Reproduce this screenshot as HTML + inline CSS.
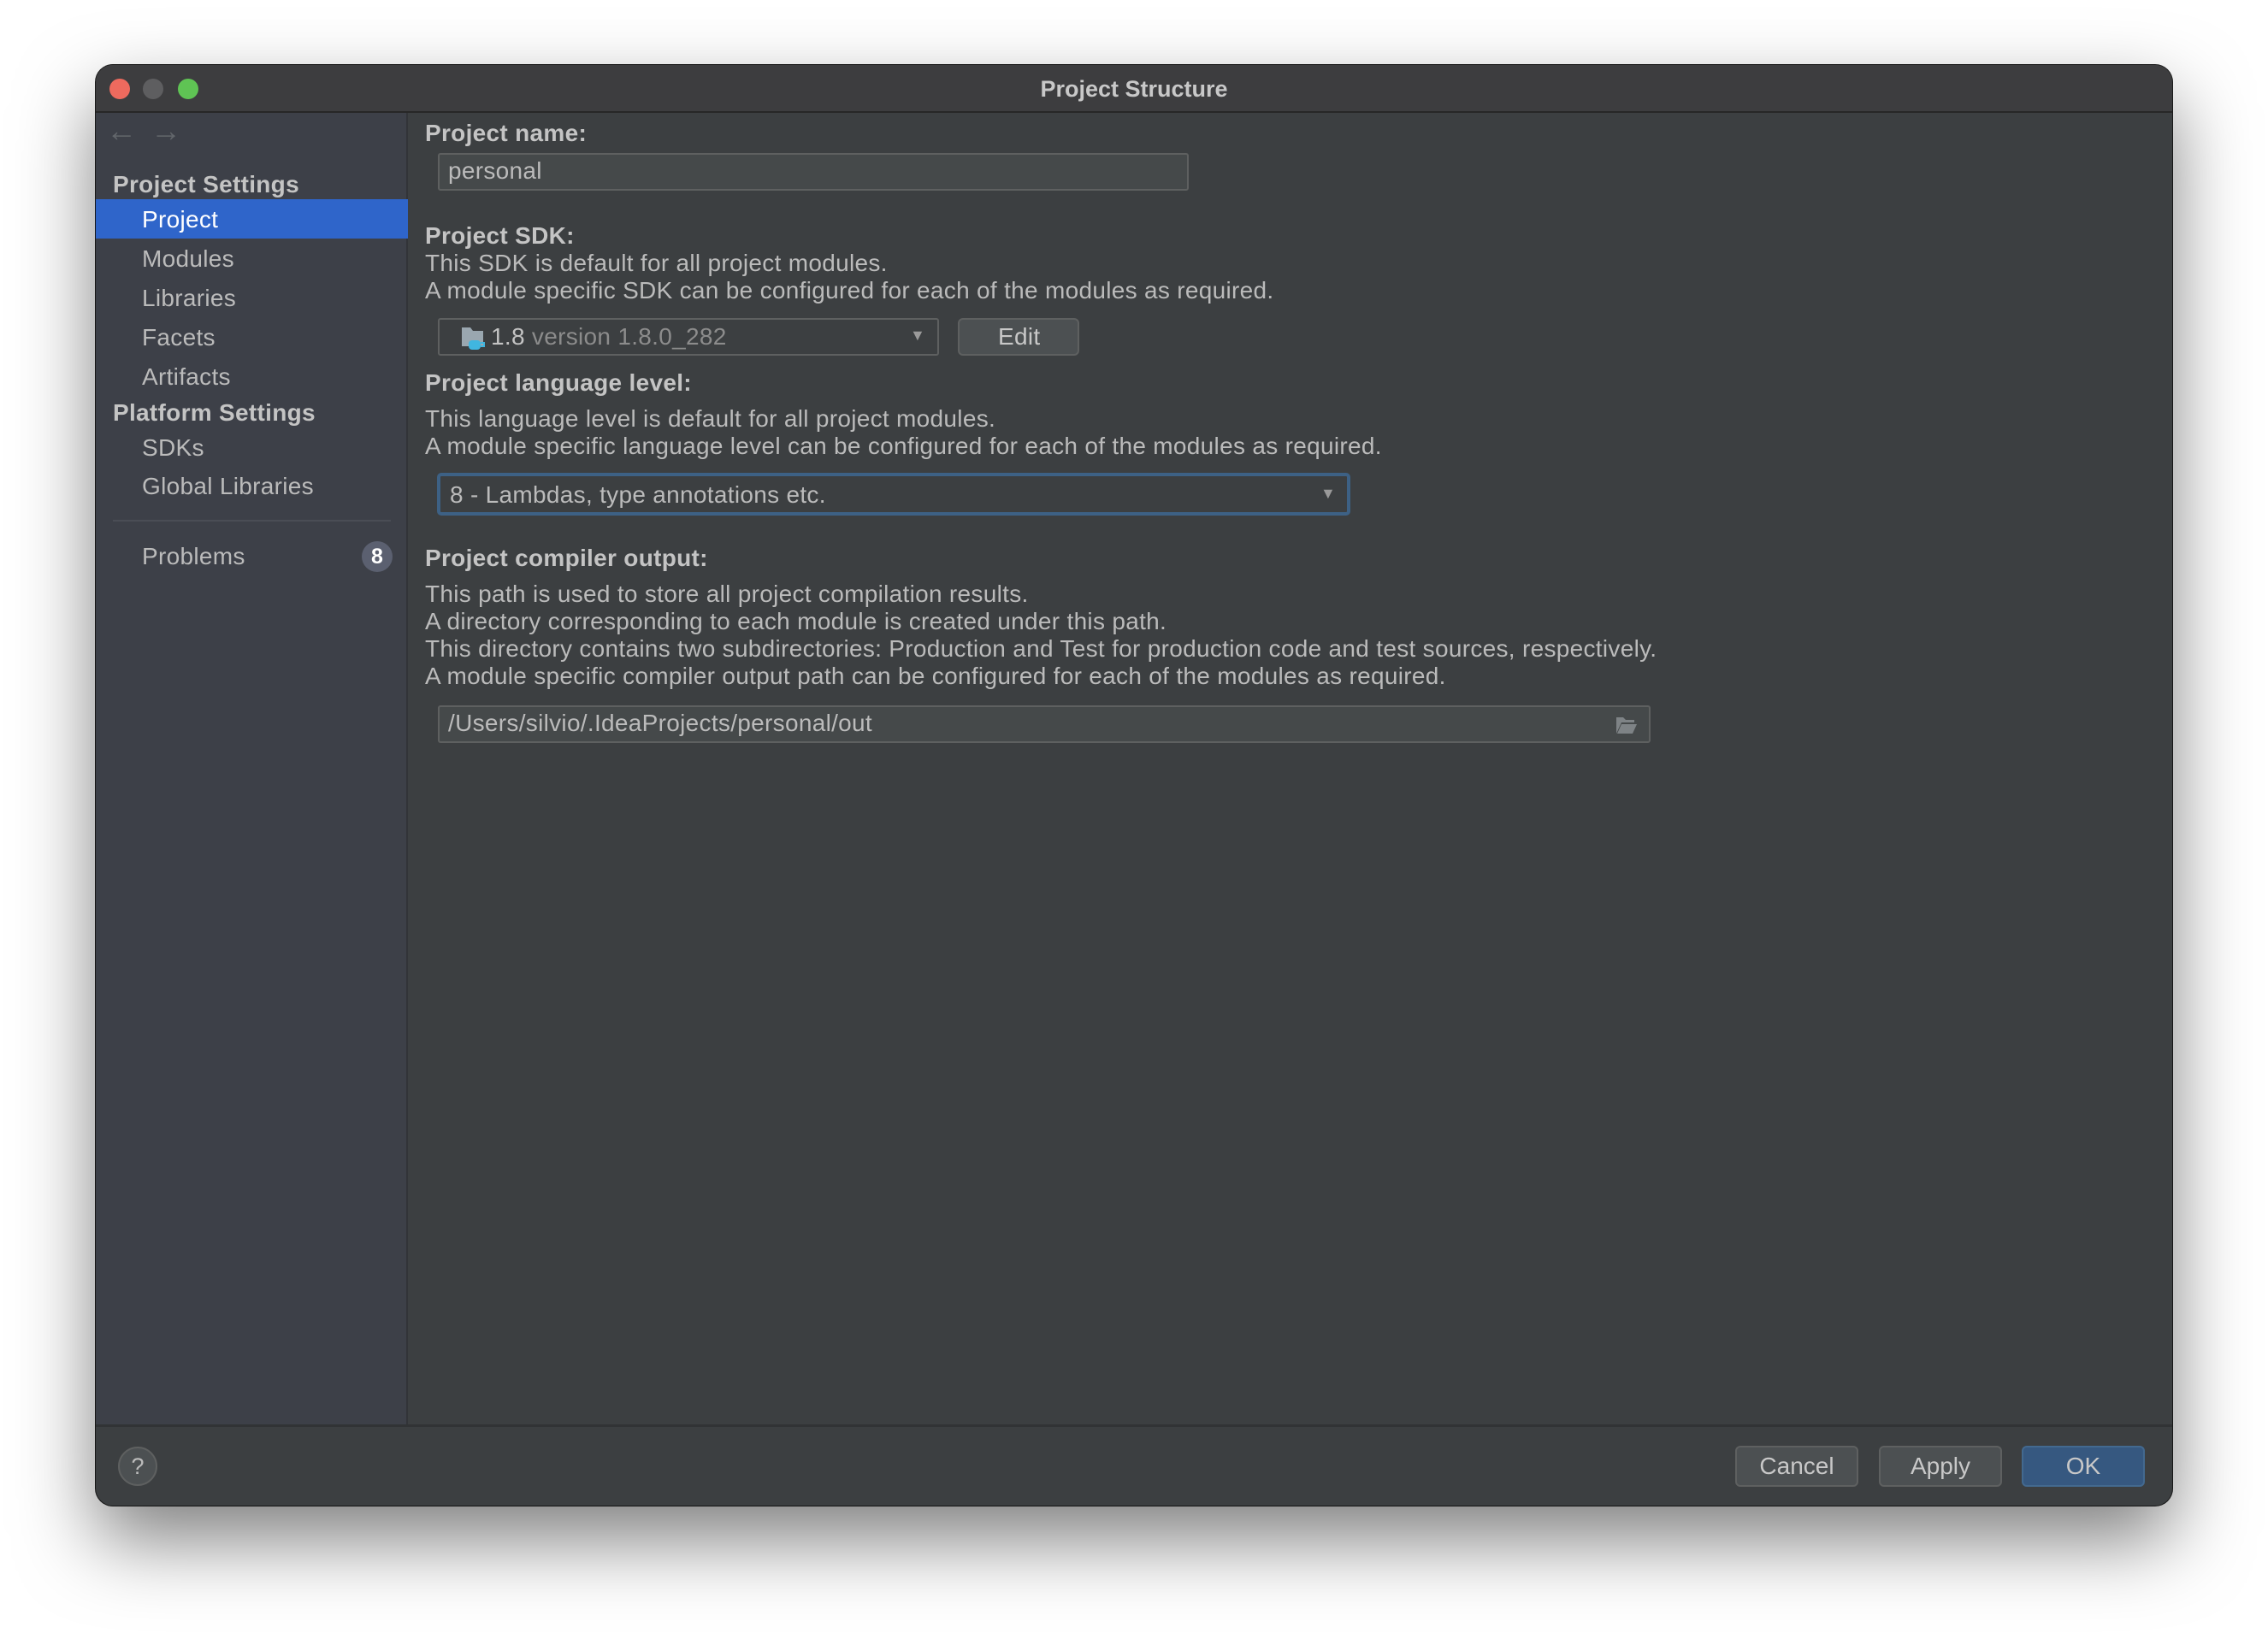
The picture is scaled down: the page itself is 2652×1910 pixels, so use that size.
<!DOCTYPE html>
<html><head><meta charset="utf-8"><style>
*{margin:0;padding:0;box-sizing:border-box}
body{width:2652px;height:1910px;background:#fff;font-family:"Liberation Sans",sans-serif;position:relative;overflow:hidden;color:#bbbbbb}
.win{position:absolute;left:112px;top:76px;width:2428px;height:1685px;border-radius:20px;background:#3c3f41;overflow:hidden;box-shadow:0 40px 90px rgba(0,0,0,.5),0 0 0 1px #1e1e1e}
.title{position:absolute;left:0;top:0;width:100%;height:56px;background:#3d3d3f;border-bottom:2px solid #272727;text-align:center;line-height:56px;font-weight:bold;font-size:27px;color:#c8c8c8}
.tl{position:absolute;top:16px;width:24px;height:24px;border-radius:50%}
.side{position:absolute;left:0;top:56px;width:365px;bottom:93px;background:#3d4048;border-right:2px solid #323438}
.a{position:absolute;font-size:28px;white-space:nowrap;letter-spacing:0.3px}
.b{font-weight:bold;color:#c4c4c4}
.sel{position:absolute;left:0;top:101px;width:365px;height:46px;background:#2f65ca}
.fld{position:absolute;border:2px solid #5e6060;background:#45494a;border-radius:3px}
.btn{position:absolute;top:1615px;height:48px;border:2px solid #5e6060;background:#4c5052;border-radius:6px;text-align:center;line-height:44px;font-size:28px;color:#c8c8c8}
.bot{position:absolute;left:0;top:1590px;width:100%;height:3px;background:#313335}
</style></head><body>
<div class="win">
 <div class="title">Project Structure
  <div class="tl" style="left:16px;background:#ee6a5e"></div>
  <div class="tl" style="left:55px;background:#5e5e60"></div>
  <div class="tl" style="left:96px;background:#5fc454"></div>
 </div>
 <div class="side">
  <div class="a" style="left:12px;top:0px;font-size:36px;color:#62666b">&#8592;</div>
  <div class="a" style="left:64px;top:0px;font-size:36px;color:#62666b">&#8594;</div>
  <div class="a b" style="left:20px;top:68px">Project Settings</div>
  <div class="sel"></div>
  <div class="a" style="left:54px;top:109px;color:#fff">Project</div>
  <div class="a" style="left:54px;top:155px">Modules</div>
  <div class="a" style="left:54px;top:201px">Libraries</div>
  <div class="a" style="left:54px;top:247px">Facets</div>
  <div class="a" style="left:54px;top:293px">Artifacts</div>
  <div class="a b" style="left:20px;top:335px">Platform Settings</div>
  <div class="a" style="left:54px;top:376px">SDKs</div>
  <div class="a" style="left:54px;top:421px">Global Libraries</div>
  <div style="position:absolute;left:20px;top:476px;width:325px;height:2px;background:#4a4d55"></div>
  <div class="a" style="left:54px;top:503px">Problems</div>
  <div style="position:absolute;left:311px;top:501px;width:36px;height:36px;border-radius:50%;background:#5b6070;color:#fff;font-weight:bold;font-size:25px;text-align:center;line-height:36px">8</div>
 </div>
 <div class="a b" style="left:385px;top:64px">Project name:</div>
 <div class="fld" style="left:400px;top:103px;width:878px;height:44px"></div>
 <div class="a" style="left:412px;top:108px">personal</div>
 <div class="a b" style="left:385px;top:184px">Project SDK:</div>
 <div class="a" style="left:385px;top:216px">This SDK is default for all project modules.</div>
 <div class="a" style="left:385px;top:248px">A module specific SDK can be configured for each of the modules as required.</div>
 <div class="fld" style="left:400px;top:296px;width:586px;height:44px;background:#3c3f41"></div>
 <svg style="position:absolute;left:426px;top:305px" width="32" height="30"><path d="M2 2h10l3 4h12v18H2z" fill="#9aa7b0"/><rect x="10" y="17" width="14" height="11" rx="4" fill="#40b6e0"/><path d="M24 20h4v4h-4" stroke="#40b6e0" stroke-width="2" fill="none"/></svg>
 <div class="a" style="left:462px;top:302px;color:#c4c4c4">1.8 <span style="color:#8c8c8c">version 1.8.0_282</span></div>
 <div class="a" style="left:952px;top:306px;font-size:18px;color:#9a9a9a">&#9660;</div>
 <div class="fld" style="left:1008px;top:296px;width:142px;height:44px;background:#4c5052;border-radius:6px"></div>
 <div class="a" style="left:1055px;top:302px;color:#c8c8c8">Edit</div>
 <div class="a b" style="left:385px;top:356px">Project language level:</div>
 <div class="a" style="left:385px;top:398px">This language level is default for all project modules.</div>
 <div class="a" style="left:385px;top:430px">A module specific language level can be configured for each of the modules as required.</div>
 <div style="position:absolute;left:399px;top:477px;width:1068px;height:50px;border:4px solid #3d6185;border-radius:5px;background:#3c3f41"></div>
 <div class="a" style="left:414px;top:487px">8 - Lambdas, type annotations etc.</div>
 <div class="a" style="left:1432px;top:491px;font-size:18px;color:#9a9a9a">&#9660;</div>
 <div class="a b" style="left:385px;top:561px">Project compiler output:</div>
 <div class="a" style="left:385px;top:603px">This path is used to store all project compilation results.</div>
 <div class="a" style="left:385px;top:635px">A directory corresponding to each module is created under this path.</div>
 <div class="a" style="left:385px;top:667px">This directory contains two subdirectories: Production and Test for production code and test sources, respectively.</div>
 <div class="a" style="left:385px;top:699px">A module specific compiler output path can be configured for each of the modules as required.</div>
 <div class="fld" style="left:400px;top:749px;width:1418px;height:44px"></div>
 <div class="a" style="left:412px;top:754px">/Users/silvio/.IdeaProjects/personal/out</div>
 <svg style="position:absolute;left:1776px;top:760px" width="28" height="24"><path d="M2 3h8l3 3h10v3H8l-6 13z" fill="#7e8386"/><path d="M8 11h18l-5 11H3z" fill="#7e8386"/></svg>
 <div class="bot"></div>
 <div style="position:absolute;left:26px;top:1616px;width:46px;height:46px;border-radius:50%;border:2px solid #5e6060;background:#4c5052;text-align:center;line-height:42px;font-size:27px;color:#bbb">?</div>
 <div class="btn" style="left:1917px;width:144px">Cancel</div>
 <div class="btn" style="left:2085px;width:144px">Apply</div>
 <div class="btn" style="left:2252px;width:144px;background:#365880;border-color:#43698f">OK</div>
</div>
</body></html>
